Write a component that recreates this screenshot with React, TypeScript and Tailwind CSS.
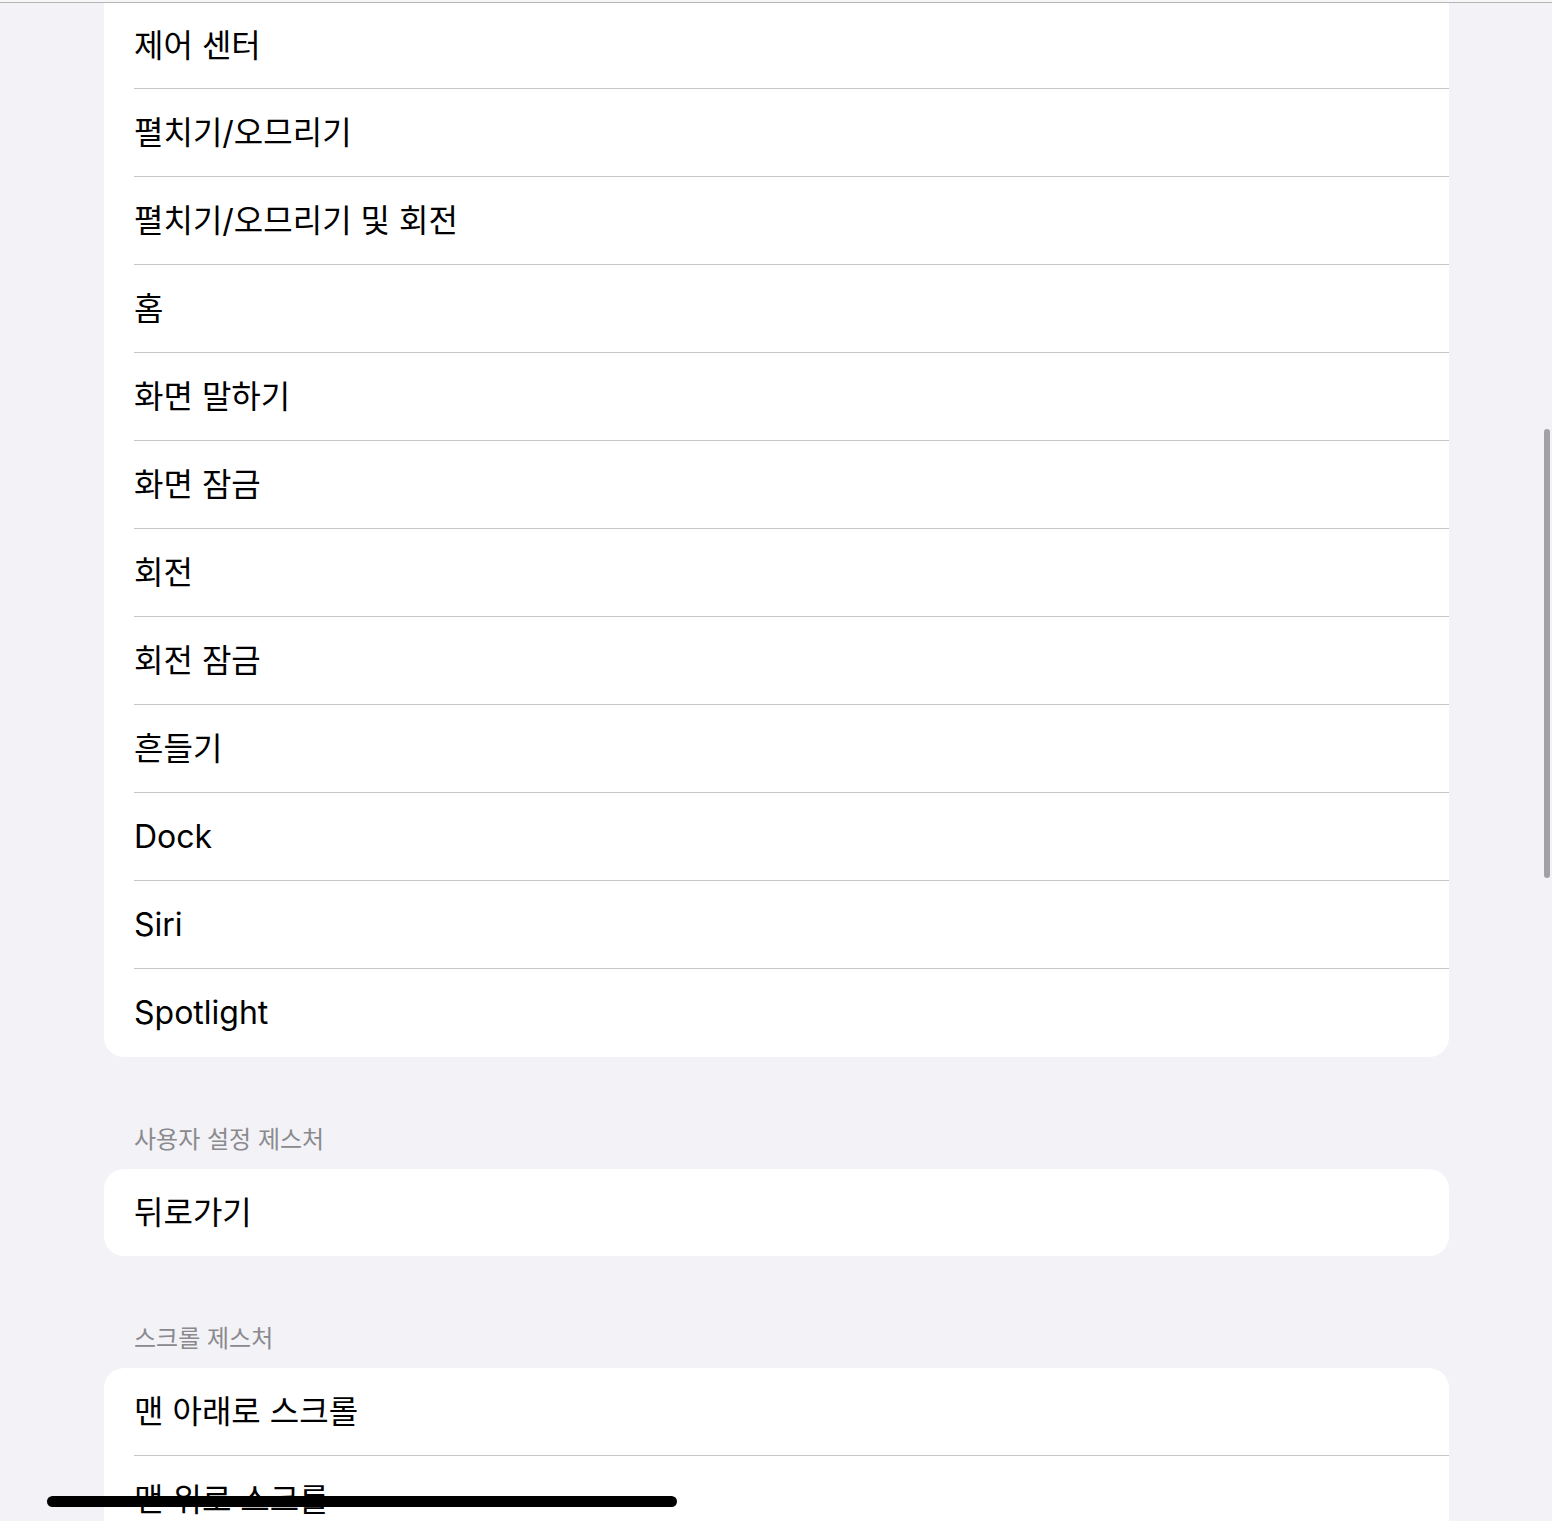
import React from "react";

const font = { fontFamily: 'Inter, "Noto Sans CJK KR", "Noto Sans", sans-serif' };

const mainRows = [
  "펼치기/오므리기",
  "펼치기/오므리기 및 회전",
  "홈",
  "화면 말하기",
  "화면 잠금",
  "회전",
  "회전 잠금",
  "흔들기",
  "Dock",
  "Siri",
  "Spotlight",
];

const Row = ({ label, last, h = "h-[88px]" }: { label: string; last?: boolean; h?: string }) => (
  <div className={`${h} pl-[30px] flex flex-col`}>
    <div className="flex-1 flex items-center text-[32px] text-black leading-none">{label}</div>
    {!last && <div className="h-px bg-[#c6c6c8]" />}
  </div>
);

const Header = ({ title }: { title: string }) => (
  <div className="h-[112px] flex items-end pb-[15px] pl-[30px] text-[24px] leading-[29px] text-[#8a8a8e]">
    {title}
  </div>
);

export default function App() {
  return (
    <div style={font} className="relative w-[1552px] h-[1521px] overflow-hidden bg-[#f2f2f7]">
      <div className="h-[2px] bg-[#f7f7f7]" />
      <div className="h-px bg-[#b4b4b4]" />
      <div className="pl-[104px] pr-[103px]">
        <div className="bg-white rounded-b-[20px]">
          <Row label="제어 센터" h="h-[86px]" />
          {mainRows.map((r, i) => (
            <Row key={r} label={r} last={i === mainRows.length - 1} />
          ))}
        </div>

        <Header title="사용자 설정 제스처" />
        <div className="bg-white rounded-[20px]">
          <Row label="뒤로가기" h="h-[87px]" last />
        </div>

        <Header title="스크롤 제스처" />
        <div className="bg-white rounded-t-[20px]">
          <Row label="맨 아래로 스크롤" />
          <Row label="맨 위로 스크롤" last />
        </div>
      </div>

      {/* scroll indicator */}
      <div className="absolute left-[1544px] top-[429px] w-[6px] h-[449px] rounded-full bg-[#a1a1a6]" />
      {/* home indicator */}
      <div className="absolute left-[47px] top-[1496px] w-[630px] h-[11px] rounded-full bg-black" />
    </div>
  );
}
